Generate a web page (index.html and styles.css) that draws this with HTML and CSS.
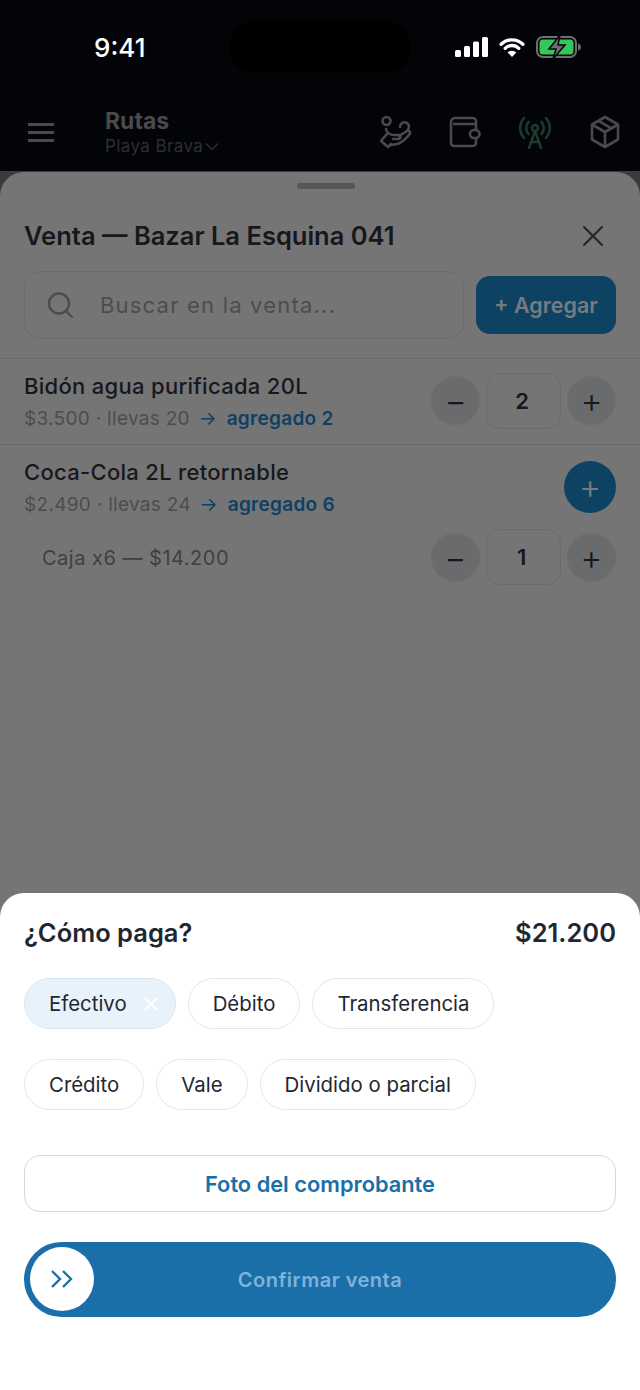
FILE: index.html
```html
<!DOCTYPE html>
<html lang="es">
<head>
  <meta charset="UTF-8">
  <meta name="viewport" content="width=device-width, initial-scale=1.0">
  <title>Venta</title>
  <link rel="stylesheet" href="styles.css">
</head>
<body>
  <div class="screen">

    <!-- Status bar and app bar, dimmed by the sheet -->
    <header class="top">
      <div class="status">
        <span class="time">9:41</span>
        <div class="island"></div>
        <div class="status-icons">
          <svg width="33" height="20" viewBox="0 0 33 20"><rect x="0" y="13" width="6" height="7" rx="1.500" fill="#fff"/><rect x="9" y="9" width="6" height="11" rx="1.500" fill="#fff"/><rect x="18" y="4.500" width="6" height="15.500" rx="1.500" fill="#fff"/><rect x="27" y="0" width="6" height="20" rx="1.500" fill="#fff"/></svg>
          <svg width="26" height="20" viewBox="0 0 28 22"><path d="M2 8a17 17 0 0 1 24 0M6.500 12.500a10.500 10.500 0 0 1 15 0" fill="none" stroke="#fff" stroke-width="3.600" stroke-linecap="round"/><path d="M14 22l-4.800-5a6.800 6.800 0 0 1 9.600 0z" fill="#fff"/></svg>
          <svg width="46" height="24" viewBox="0 0 46 24"><rect x="1" y="2" width="39" height="20" rx="6" fill="none" stroke="#6e6e6e" stroke-width="2"/><rect x="3.500" y="4.500" width="34" height="15" rx="3.500" fill="#34c759"/><path d="M42 8.500c2 .5 3 2 3 3.500s-1 3-3 3.500z" fill="#6e6e6e"/><path d="M24 0L13 14h7l-3 10 12-14h-7z" fill="#6e6e6e" stroke="#020408" stroke-width="1.500"/></svg>
        </div>
      </div>
      <div class="appbar">
        <div class="burger"><span></span><span></span><span></span></div>
        <div class="route">
          <div class="route-name">Rutas</div>
          <div class="route-place"><span>Playa Brava</span>
            <svg width="14" height="9" viewBox="0 0 14 9"><path d="M1 1.500l6 6 6-6" fill="none" stroke="#2e2f32" stroke-width="1.400"/></svg>
          </div>
        </div>
        <div class="bar-icons">
          <svg width="34" height="34" viewBox="0 0 34 34" fill="none" stroke="#4a4a4b" stroke-width="2.600" stroke-linejoin="round" stroke-linecap="round"><circle cx="8.500" cy="6" r="4"/><path d="M22 12a4.500 4.500 0 1 1 7 3.500"/><path d="M8 14c1 4 4 6 8 6h5c2 0 2 4-1 4h-5"/><path d="M21 21l8-5c3-1 4 2 2 4-3 3-7 8-12 9l-6 1"/><path d="M9 19l-6 7 7 6 3-3"/></svg>
          <svg width="32" height="34" viewBox="0 0 32 34" fill="none" stroke="#4a4a4b" stroke-width="2.600" stroke-linejoin="round"><path d="M2 7a4 4 0 0 1 4-4h18a3 3 0 0 1 3 3v2"/><path d="M2 7v21a3 3 0 0 0 3 3h19a3 3 0 0 0 3-3V9H4"/><rect x="21" y="15" width="9.500" height="8" rx="4" fill="#020408"/></svg>
          <svg width="34" height="34" viewBox="0 0 34 34" fill="none" stroke="#1d3b2a" stroke-width="2.600" stroke-linecap="round" stroke-linejoin="round"><circle cx="17" cy="13" r="3"/><path d="M17 16l-6 17M17 16l6 17M13 27h8"/><path d="M10.500 19a9 9 0 0 1 0-12M23.500 7a9 9 0 0 1 0 12M6 23a15 15 0 0 1 0-20M28 3a15 15 0 0 1 0 20"/></svg>
          <svg width="32" height="34" viewBox="0 0 32 34" fill="none" stroke="#4a4a4b" stroke-width="2.600" stroke-linejoin="round"><path d="M16 2l13 7.500v15L16 32 3 24.500v-15z"/><path d="M3 9.500L16 17l13-7.500M16 17v15M9.500 5.800l13 7.500"/></svg>
        </div>
      </div>
    </header>

    <!-- Dimmed sale sheet -->
    <main class="sheet">
      <div class="handle"></div>
      <div class="sheet-head">
        <h1>Venta — Bazar La Esquina 041</h1>
        <svg width="20" height="20" viewBox="0 0 20 20"><path d="M1 1l18 18M19 1L1 19" fill="none" stroke="#25272b" stroke-width="2.200" stroke-linecap="round"/></svg>
      </div>

      <div class="search-row">
        <div class="search">
          <svg width="28" height="28" viewBox="0 0 28 28" fill="none" stroke="#4c4d4f" stroke-width="2.400"><circle cx="13" cy="12.500" r="10"/><path d="M20 20l6 6" stroke-linecap="round"/></svg>
          <span>Buscar en la venta...</span>
        </div>
        <div class="add-btn">+ Agregar</div>
      </div>

      <div class="item item-first">
        <div class="item-text">
          <div class="item-name">Bidón agua purificada 20L</div>
          <div class="item-sub">$3.500 · llevas 20 <span class="arrow">→</span> <b>agregado 2</b></div>
        </div>
        <div class="stepper">
          <div class="step">−</div>
          <div class="qty">2</div>
          <div class="step">+</div>
        </div>
      </div>

      <div class="item item-second">
        <div class="item-text">
          <div class="item-name">Coca-Cola 2L retornable</div>
          <div class="item-sub">$2.490 · llevas 24 <span class="arrow">→</span> <b>agregado 6</b></div>
        </div>
        <div class="plus-round">+</div>
      </div>

      <div class="pack">
        <span>Caja x6 — $14.200</span>
        <div class="stepper">
          <div class="step">−</div>
          <div class="qty">1</div>
          <div class="step">+</div>
        </div>
      </div>

      <!-- Payment panel -->
      <section class="pay">
        <div class="pay-head">
          <span>¿Cómo paga?</span>
          <span>$21.200</span>
        </div>
        <div class="chips">
          <div class="chip chip-on">Efectivo
            <svg width="16" height="16" viewBox="0 0 16 16"><path d="M1.500 1.500l13 13M14.500 1.500l-13 13" fill="none" stroke="#fff" stroke-width="1.800"/></svg>
          </div>
          <div class="chip">Débito</div>
          <div class="chip">Transferencia</div>
          <div class="chip">Crédito</div>
          <div class="chip">Vale</div>
          <div class="chip">Dividido o parcial</div>
        </div>
        <div class="photo-btn">Foto del comprobante</div>
        <div class="slider">
          <div class="knob">
            <svg width="24" height="20" viewBox="0 0 24 20"><path d="M2 2l8 8-8 8M13 2l8 8-8 8" fill="none" stroke="#1a6fa8" stroke-width="2.400"/></svg>
          </div>
          <span>Confirmar venta</span>
        </div>
      </section>
    </main>

  </div>
</body>
</html>
```

FILE: styles.css
```css
/* General reset */
html, body {
  margin: 0;
  padding: 0;
}

body {
  font-family: 'Inter', 'Noto Sans', sans-serif;
  background: #020408;
}

.screen {
  width: 640px;
  height: 1390px;
  display: flex;
  flex-direction: column;
  background: linear-gradient(#020408 171px, #3a3b3d 171px);
  overflow: hidden;
}

/* Top area */
.top {
  height: 172px;
  flex: none;
}

.status {
  height: 94px;
  position: relative;
  display: flex;
  justify-content: space-between;
  align-items: center;
  box-sizing: border-box;
  padding: 0 58px 0 94px;
}

.time {
  color: #fff;
  font-size: 26px;
  font-weight: 500;
}

.island {
  position: absolute;
  left: 229px;
  top: 21px;
  width: 182px;
  height: 52px;
  border-radius: 26px;
  background: #000;
}

.status-icons {
  display: flex;
  align-items: center;
  gap: 11px;
}

.appbar {
  height: 78px;
  display: flex;
  align-items: center;
  box-sizing: border-box;
  padding: 0 19px 2px 28px;
}

.burger {
  width: 26px;
  display: flex;
  flex-direction: column;
  gap: 5px;
  margin-right: 51px;
}

.burger span {
  height: 3px;
  background: #4a4a4b;
}

.route {
  flex: 1;
}

.route-name {
  color: #4a4a4b;
  font-size: 23px;
  font-weight: 700;
  line-height: 28px;
}

.route-place {
  display: flex;
  align-items: center;
  gap: 2px;
  color: #2e2f32;
  font-size: 17px;
  line-height: 22px;
  letter-spacing: 0.400px;
}

.bar-icons {
  display: flex;
  align-items: center;
  gap: 37px;
}

/* Sale sheet */
.sheet {
  flex: 1;
  display: flex;
  flex-direction: column;
  background: #757575;
  border-radius: 24px 24px 0 0;
}

.handle {
  width: 58px;
  height: 6px;
  border-radius: 3px;
  background: #55565a;
  margin: 11px 0 0 297px;
}

.sheet-head {
  display: flex;
  justify-content: space-between;
  align-items: center;
  margin-top: 31px;
  padding: 0 37px 0 24px;
}

h1 {
  margin: 0;
  color: #16181c;
  font-size: 25.500px;
  line-height: 32px;
  font-weight: 600;
}

.search-row {
  display: flex;
  align-items: center;
  gap: 12px;
  margin-top: 19px;
  padding: 0 24px 19px;
  border-bottom: 1px solid #69696a;
}

.search {
  flex: 1;
  height: 68px;
  display: flex;
  align-items: center;
  gap: 26px;
  box-sizing: border-box;
  padding-left: 21px;
  border: 1.500px solid #6b6b6c;
  border-radius: 16px;
  color: #4c4d4f;
  font-size: 22px;
  letter-spacing: 1.200px;
}

.add-btn {
  width: 140px;
  height: 58px;
  display: flex;
  align-items: center;
  justify-content: center;
  border-radius: 14px;
  background: #0d4263;
  color: #767b80;
  font-size: 21.500px;
  font-weight: 600;
}

.item {
  display: flex;
  justify-content: space-between;
  align-items: center;
  padding: 0 24px;
}

.item-first {
  height: 85px;
  border-bottom: 1px solid #69696a;
}

.item-first .stepper,
.plus-round,
.pack .stepper {
  margin-bottom: 2px;
}

.item-second {
  height: 85px;
}

.item-name {
  color: #16181c;
  font-size: 22px;
  line-height: 28px;
  font-weight: 500;
  letter-spacing: 0.300px;
}

.item-sub {
  margin-top: 7px;
  color: #4c4d4f;
  font-size: 19px;
  line-height: 24px;
  letter-spacing: 0.300px;
}

.item-sub b {
  color: #0e4063;
  font-weight: 600;
}

.arrow {
  color: #0e4063;
  margin: 0 4px 0 3px;
}

.stepper {
  display: flex;
  align-items: center;
  gap: 6px;
}

.step {
  width: 49px;
  height: 49px;
  display: flex;
  align-items: center;
  justify-content: center;
  border-radius: 50%;
  border: 1px solid #6d6d6e;
  box-sizing: border-box;
  background: #6a6b6d;
  color: #16181c;
  font-size: 34px;
  font-weight: 300;
}

.qty {
  width: 75px;
  height: 56px;
  display: flex;
  align-items: center;
  justify-content: center;
  box-sizing: border-box;
  padding-right: 3px;
  border: 1.500px solid #6b6b6c;
  border-radius: 14px;
  color: #16181c;
  font-size: 22px;
  font-weight: 600;
}

.plus-round {
  width: 52px;
  height: 52px;
  display: flex;
  align-items: center;
  justify-content: center;
  border-radius: 50%;
  background: #0d4263;
  color: #767b80;
  font-size: 34px;
  font-weight: 300;
}

.pack {
  display: flex;
  justify-content: space-between;
  align-items: center;
  height: 56px;
  padding: 0 24px 0 42px;
  color: #3f4043;
  font-size: 20px;
  letter-spacing: 0.500px;
}

/* Payment panel */
.pay {
  margin-top: auto;
  height: 497px;
  box-sizing: border-box;
  padding: 23px 24px 0;
  background: #fff;
  border-radius: 24px 24px 0 0;
}

.pay-head {
  display: flex;
  justify-content: space-between;
  align-items: center;
  height: 32px;
  color: #1f2733;
  font-size: 25.500px;
  font-weight: 600;
}

.chips {
  display: flex;
  flex-wrap: wrap;
  gap: 30px 12px;
  margin-top: 30px;
}

.chip {
  height: 51px;
  display: flex;
  align-items: center;
  gap: 16px;
  box-sizing: border-box;
  padding: 0 24px;
  border: 1.500px solid #e3e5e9;
  border-radius: 26px;
  background: #fff;
  color: #1f2733;
  font-size: 20.400px;
}

.chip-on {
  background: #e8f2fa;
  border-color: #d9e5ee;
  padding-right: 16px;
}

.photo-btn {
  height: 57px;
  display: flex;
  align-items: center;
  justify-content: center;
  box-sizing: border-box;
  margin-top: 45px;
  border: 1.500px solid #d5d7db;
  border-radius: 16px;
  color: #1a6fa8;
  font-size: 21.800px;
  font-weight: 600;
}

.slider {
  height: 75px;
  position: relative;
  display: flex;
  align-items: center;
  justify-content: center;
  margin-top: 30px;
  border-radius: 38px;
  background: #1a6fa8;
  color: #7fb3d9;
  font-size: 20px;
  font-weight: 600;
  letter-spacing: 0.500px;
}

.knob {
  position: absolute;
  left: 6px;
  top: 5px;
  width: 64px;
  height: 64px;
  display: flex;
  align-items: center;
  justify-content: center;
  border-radius: 50%;
  background: #fff;
}
```
